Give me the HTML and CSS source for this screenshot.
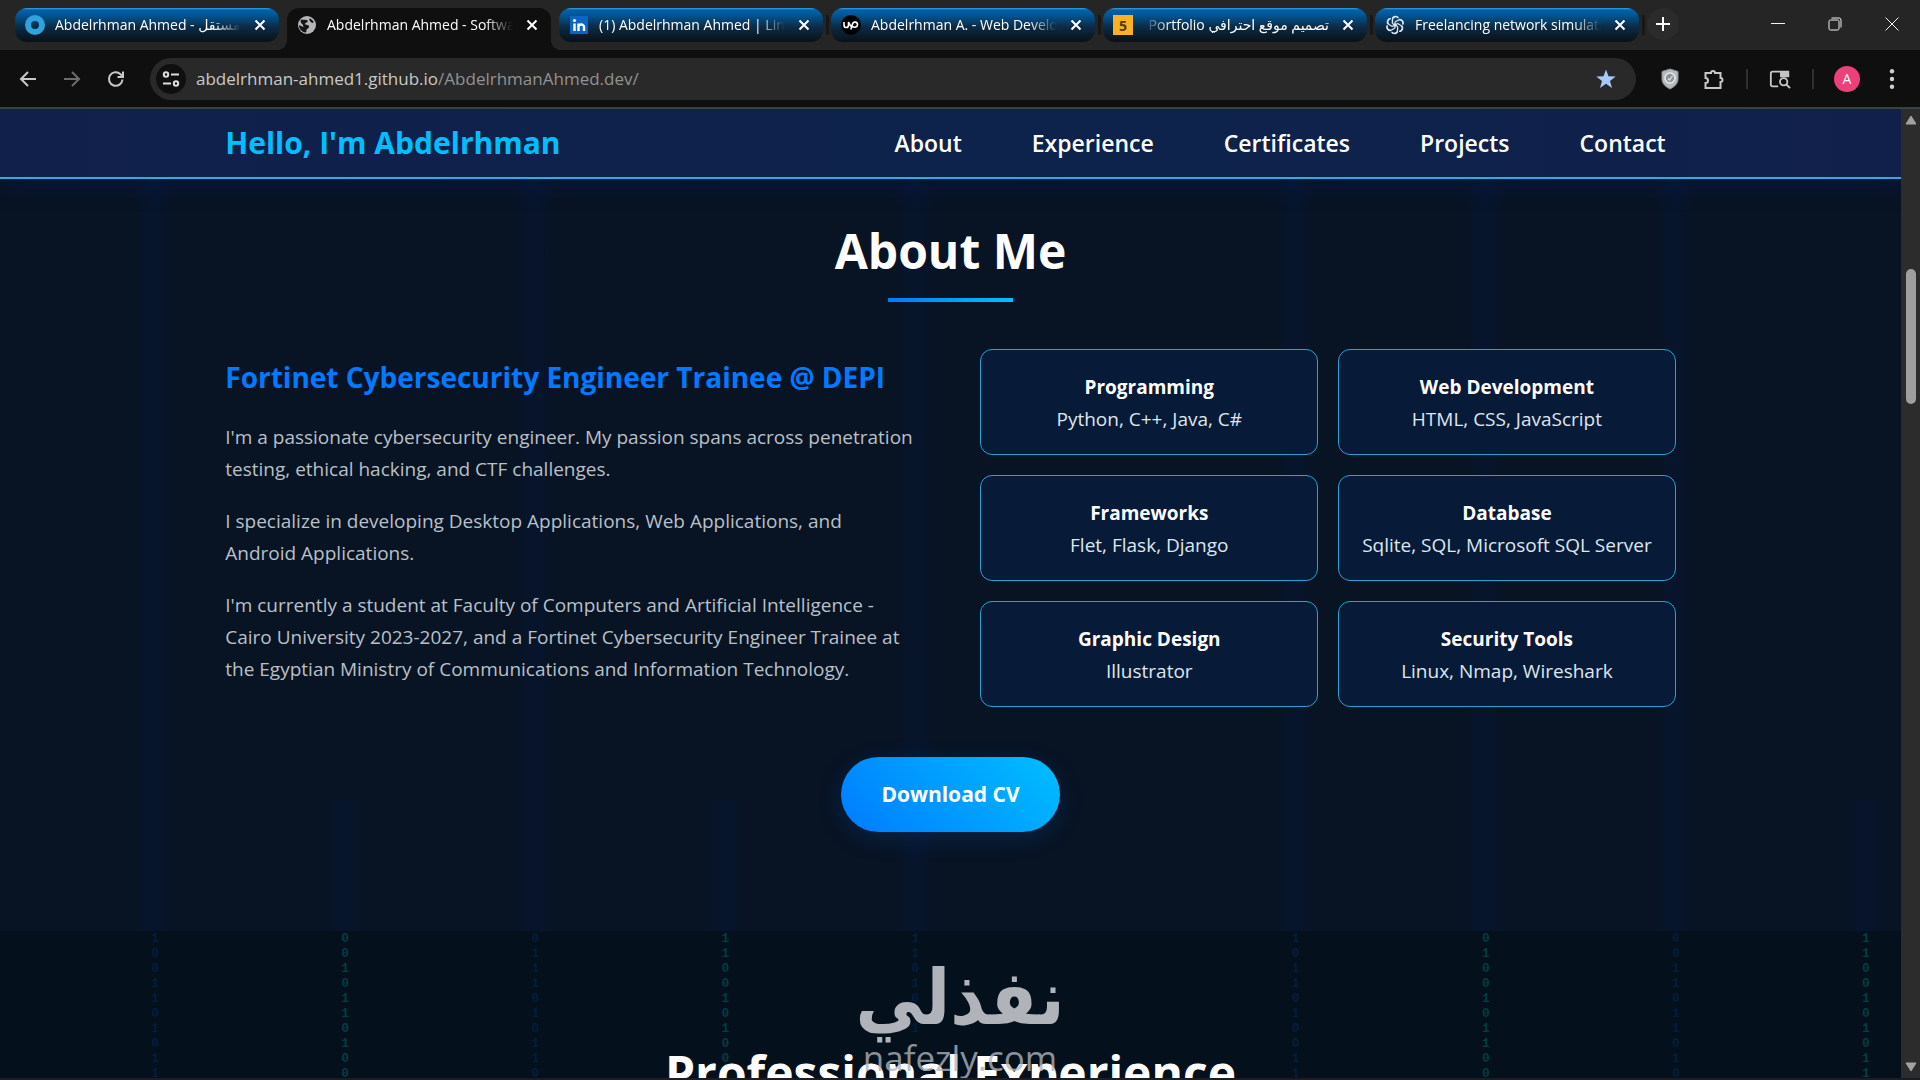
FILE: index.html
```html
<!DOCTYPE html>
<html lang="en">
<head>
<meta charset="utf-8">
<meta name="viewport" content="width=device-width, initial-scale=1">
<title>Abdelrhman Ahmed - Software Engineer</title>
<link rel="stylesheet" href="styles.css">
</head>
<body>
<div class="browser">
  <div class="tabstrip">
    <div class="tabs">
      <div class="tab">
        <svg class="favicon" viewBox="0 0 20 20"><circle cx="10" cy="10" r="7" fill="none" stroke="#2fa4dc" stroke-width="6"/></svg>
        <span class="tab-title">Abdelrhman Ahmed - مستقل</span>
        <button class="tab-close" aria-label="Close tab"><svg viewBox="0 0 14 14"><path d="M2.500 2.500l9 9M11.500 2.500l-9 9"/></svg></button>
      </div>
      <div class="tab active">
        <svg class="favicon" viewBox="0 0 20 20"><circle cx="10" cy="10" r="9" fill="#b4b6b9"/><path d="M4 4.500c2 1 5-.5 6.500 1 1 1.500-1 2-2 2.500-1 .8-.5 1.500.8 1.700 1.700.3 3 .6 2.700 2.300-.3 1.500-2 1.500-2.500 2.800-.3 1 .2 1.700-.5 2.700C4.500 17 2 14 2 10c1 1 3 1 4 2 .8.8.3-2-.8-3C4 8 3 6.500 4 4.500zM12.500 3.500c2 .5 3.500 2 4.300 4-1.300.8-3-.2-3.800-1.300-.6-1-.9-1.700-.5-2.700z" fill="#151515"/></svg>
        <span class="tab-title">Abdelrhman Ahmed - Software</span>
        <button class="tab-close" aria-label="Close tab"><svg viewBox="0 0 14 14"><path d="M2.500 2.500l9 9M11.500 2.500l-9 9"/></svg></button>
      </div>
      <div class="tab">
        <svg class="favicon" viewBox="0 0 20 20"><rect x="1" y="1" width="18" height="18" fill="#0a66c2"/><circle cx="5.500" cy="5.500" r="1.600" fill="#fff"/><path d="M5.500 8.500V16M9.500 8.500V16M9.500 12c0-3 5.500-3.500 5.500 0v4" fill="none" stroke="#fff" stroke-width="2.400"/></svg>
        <span class="tab-title">(1) Abdelrhman Ahmed | LinkedIn</span>
        <button class="tab-close" aria-label="Close tab"><svg viewBox="0 0 14 14"><path d="M2.500 2.500l9 9M11.500 2.500l-9 9"/></svg></button>
      </div>
      <div class="tab">
        <svg class="favicon" viewBox="0 0 20 20"><circle cx="10" cy="10" r="10" fill="#000"/><path d="M3 7v3c0 3.400 4.500 3.400 4.500 0V7c1 2.500 2.500 4.500 4 5.500M9.800 14.500l1.700-5.500c.9-2.800 5-2.300 5 .4 0 2.800-3.500 3.600-5 1.800" fill="none" stroke="#fff" stroke-width="1.600"/></svg>
        <span class="tab-title">Abdelrhman A. - Web Developer</span>
        <button class="tab-close" aria-label="Close tab"><svg viewBox="0 0 14 14"><path d="M2.500 2.500l9 9M11.500 2.500l-9 9"/></svg></button>
      </div>
      <div class="tab">
        <span class="favicon five">5</span>
        <span class="tab-title rtl" dir="rtl">تصميم موقع احترافي Portfolio</span>
        <button class="tab-close" aria-label="Close tab"><svg viewBox="0 0 14 14"><path d="M2.500 2.500l9 9M11.500 2.500l-9 9"/></svg></button>
      </div>
      <div class="tab">
        <svg class="favicon" viewBox="0 0 20 20" fill="none" stroke="#dfe6ee" stroke-width="1.300"><path id="petal" d="M10 7L13 5.300a3.300 3.300 0 0 1 4.600 4.400M10 7v4.500M7.300 3.500A3.400 3.400 0 0 1 13 2.600"/><use href="#petal" transform="rotate(60 10 10)"/><use href="#petal" transform="rotate(120 10 10)"/><use href="#petal" transform="rotate(180 10 10)"/><use href="#petal" transform="rotate(240 10 10)"/><use href="#petal" transform="rotate(300 10 10)"/></svg>
        <span class="tab-title">Freelancing network simulation</span>
        <button class="tab-close" aria-label="Close tab"><svg viewBox="0 0 14 14"><path d="M2.500 2.500l9 9M11.500 2.500l-9 9"/></svg></button>
      </div>
      <button class="new-tab" aria-label="New tab"><svg viewBox="0 0 14 14"><path d="M7 0v14M0 7h14"/></svg></button>
    </div>
    <div class="window-controls">
      <button aria-label="Minimize"><svg viewBox="0 0 14 14"><path d="M0 6.500h14"/></svg></button>
      <button aria-label="Restore"><svg viewBox="0 0 14 14"><rect x="1" y="3" width="10" height="10" rx="1.500"/><path d="M3.500 1H11a2 2 0 0 1 2 2v7.500"/></svg></button>
      <button aria-label="Close"><svg viewBox="0 0 14 14"><path d="M.5.5l13 13M13.500.5l-13 13"/></svg></button>
    </div>
  </div>

  <div class="toolbar">
    <button class="tool" aria-label="Back"><svg viewBox="0 0 20 20"><path d="M18 10H3M10 3l-7 7 7 7"/></svg></button>
    <button class="tool dim" aria-label="Forward"><svg viewBox="0 0 20 20"><path d="M2 10h15M10 3l7 7-7 7"/></svg></button>
    <button class="tool" aria-label="Reload"><svg viewBox="0 0 20 20"><path d="M16.500 10.500a6.800 6.800 0 1 1-2-5.300l2.500 2.300M17 2.500v5.500h-5.500"/></svg></button>
    <div class="address">
      <button class="site-info" aria-label="Site information"><svg viewBox="0 0 18 18"><circle cx="4" cy="4.500" r="2.200"/><path d="M9 4.500h8M1 13.500h8"/><circle cx="14" cy="13.500" r="2.200"/></svg></button>
      <span class="url">abdelrhman-ahmed1.github.io<span class="url-path">/AbdelrhmanAhmed.dev/</span></span>
      <button class="star" aria-label="Bookmark"><svg viewBox="0 0 20 20"><path d="M10 .5l2.500 6.800 7.200.2-5.700 4.400 2 7-6-4.100-6 4.100 2-7L.3 7.500l7.200-.2z"/></svg></button>
    </div>
    <div class="extensions">
      <button class="tool" aria-label="Shield"><svg viewBox="0 0 20 22"><path d="M10 1l8 2.500V11c0 5-4 8-8 10-4-2-8-5-8-10V3.500z" fill="#b4b9bf" stroke="#8d9298" stroke-width="1"/><circle cx="10" cy="10" r="5" fill="#8b939b" stroke="#e8ebee" stroke-width="1.500"/><path d="M8 10.500l1.500 1.500 3-4" stroke="#e8ebee" stroke-width="1.200"/></svg></button>
      <button class="tool" aria-label="Extensions"><svg viewBox="0 0 22 22"><path d="M2.500 5h5.500a2 2 0 0 1 4 0h5.500v5a2 2 0 0 1 0 4v6h-15v-5a2.500 2.500 0 0 0 0-5z"/></svg></button>
      <span class="divider"></span>
      <button class="tool" aria-label="Search side panel"><svg viewBox="0 0 24 22"><path d="M10 19H4a2 2 0 0 1-2-2V5a2 2 0 0 1 2-2h17v5"/><path d="M12 3h7a3 3 0 0 1 3 3v3H12z" fill="#c4c4c4" stroke="none"/><circle cx="16" cy="14" r="4"/><path d="M19 17l4 4"/></svg></button>
      <span class="divider"></span>
      <button class="avatar" aria-label="Profile">A</button>
      <button class="tool" aria-label="Menu"><svg viewBox="0 0 20 20"><g fill="#d0d0d0" stroke="none"><circle cx="10" cy="3" r="2"/><circle cx="10" cy="10" r="2"/><circle cx="10" cy="17" r="2"/></g></svg></button>
    </div>
  </div>

  <div class="viewport">
    <div class="page">
      <header class="site-header">
        <div class="container nav-row">
          <a class="brand" href="#home">Hello, I'm Abdelrhman</a>
          <nav class="nav-links">
            <a href="#about">About</a>
            <a href="#experience">Experience</a>
            <a href="#certificates">Certificates</a>
            <a href="#projects">Projects</a>
            <a href="#contact">Contact</a>
          </nav>
        </div>
      </header>

      <section class="about" id="about">
        <div class="rain glow" aria-hidden="true"><i></i><i class="low"></i><i></i><i class="low"></i><i></i><i class="none"></i><i></i><i></i><i></i><i class="low"></i></div>
        <div class="container">
          <h2 class="section-title underlined">About Me</h2>
          <div class="about-grid">
            <div class="about-text">
              <h3>Fortinet Cybersecurity Engineer Trainee @ DEPI</h3>
              <p>I'm a passionate cybersecurity engineer. My passion spans across penetration<br>testing, ethical hacking, and CTF challenges.</p>
              <p>I specialize in developing Desktop Applications, Web Applications, and<br>Android Applications.</p>
              <p>I'm currently a student at Faculty of Computers and Artificial Intelligence -<br>Cairo University 2023-2027, and a Fortinet Cybersecurity Engineer Trainee at<br>the Egyptian Ministry of Communications and Information Technology.</p>
            </div>
            <div class="skills">
              <div class="skill"><strong>Programming</strong><span>Python, C++, Java, C#</span></div>
              <div class="skill"><strong>Web Development</strong><span>HTML, CSS, JavaScript</span></div>
              <div class="skill"><strong>Frameworks</strong><span>Flet, Flask, Django</span></div>
              <div class="skill"><strong>Database</strong><span>Sqlite, SQL, Microsoft SQL Server</span></div>
              <div class="skill"><strong>Graphic Design</strong><span>Illustrator</span></div>
              <div class="skill"><strong>Security Tools</strong><span>Linux, Nmap, Wireshark</span></div>
            </div>
          </div>
          <div class="cta"><a class="button" href="#cv">Download CV</a></div>
        </div>
      </section>

      <section class="experience" id="experience">
        <div class="rain digits" aria-hidden="true">
          <span class="blue">1 0 0 1 1 0 1 0 1 1</span>
          <span>0 0 1 0 1 1 0 1 0 0</span>
          <span class="blue">0 1 1 1 0 1 0 1 1 0</span>
          <span>1 1 0 0 1 0 1 0 0</span>
          <span class="blue">1 1 0 1 0 1 1</span>
          <span></span>
          <span class="blue">1 0 1 1 0 1 0 0 1 1</span>
          <span>0 1 0 0 1 0 1 1 0 0</span>
          <span class="blue">0 0 1 1 0 1 1 0 1 0</span>
          <span>1 1 0 0 1 0 1 0 1 1</span>
        </div>
        <h2 class="section-title">Professional Experience</h2>
      </section>
    </div>
    <div class="scrollbar" aria-hidden="true">
      <svg viewBox="0 0 12 10"><path d="M6 1l5 8H1z"/></svg>
      <div class="track"><div class="thumb"></div></div>
      <svg viewBox="0 0 12 10"><path d="M6 9l5-8H1z"/></svg>
    </div>
  </div>
  <div class="watermark"><span class="wm-ar" lang="ar">نفذلي</span><span class="wm-en">nafezly.com</span></div>
</div>
</body>
</html>
```
FILE: styles.css
```css
* { box-sizing: border-box; }
body {
  margin: 0;
  background: #04101d;
  color: #fff;
  font-family: "Open Sans", "Noto Sans", "DejaVu Sans", sans-serif;
}
button { border: 0; padding: 0; background: none; color: inherit; font: inherit; }
a { color: inherit; text-decoration: none; }
svg { display: block; flex: none; }

.browser { position: relative; display: flex; flex-direction: column; height: 100vh; overflow: hidden; border-bottom: 2px solid #1c1d22; }

/* tab strip */
.tabstrip { display: flex; justify-content: space-between; height: 50px; flex: none; padding-left: 15px; background: #252525; }
.tabs { display: flex; gap: 8px; flex: 1; padding-top: 8px; }
.tab {
  position: relative;
  display: flex; align-items: center;
  flex: 0 1 264px; min-width: 0; height: 34px;
  padding: 0 12px 0 10px;
  border-radius: 12px;
  background: linear-gradient(#3aa2e4 0, #0060a6 2px, #005a9c 6px, #0b2c47 55%, #0a1016);
}
.tab:not(.active)::after {
  content: ""; position: absolute; right: -6px; top: 7px;
  width: 3px; height: 20px; background: #171717;
}
.tab:first-child::after { display: none; }
.tab.active { height: 42px; padding-bottom: 8px; border-radius: 12px 12px 0 0; background: #0f0f0f; }
.tab.active::before, .tab.active::after {
  content: ""; position: absolute; bottom: 0; width: 10px; height: 10px;
}
.tab.active::before { left: -10px; background: radial-gradient(circle at 0 0, transparent 10px, #0f0f0f 10px); }
.tab.active::after { right: -10px; background: radial-gradient(circle at 100% 0, transparent 10px, #0f0f0f 10px); }
.favicon { width: 20px; height: 20px; flex: none; margin-right: 10px; }
.five { display: grid; place-items: center; background: #fdb022; color: #4a3a10; font-size: 14px; font-weight: 700; }
.tab-title {
  flex: 1; min-width: 0; margin-right: 12px;
  overflow: hidden; white-space: nowrap;
  font-size: 14px; line-height: 24px;
  -webkit-mask-image: linear-gradient(to left, transparent, #000 28px);
  mask-image: linear-gradient(to left, transparent, #000 28px);
}
.tab-title.rtl {
  -webkit-mask-image: linear-gradient(to right, transparent, #000 28px);
  mask-image: linear-gradient(to right, transparent, #000 28px);
}
.tab-close svg { width: 14px; height: 14px; stroke: #fff; stroke-width: 2; }
.new-tab { display: grid; place-items: center; width: 32px; height: 32px; border-radius: 50%; background: #2b2b2b; }
.new-tab svg { width: 14px; height: 14px; stroke: #fff; stroke-width: 2; }
.window-controls { display: flex; height: 48px; }
.window-controls button { display: grid; place-items: center; width: 57px; }
.window-controls svg { width: 14px; height: 14px; fill: none; stroke: #f2f2f2; stroke-width: 1; }

/* toolbar */
.toolbar {
  display: flex; align-items: center; height: 59px; flex: none;
  padding: 0 6px;
  background: #0f0f0f; border-bottom: 2px solid #384144;
}
.tool { display: grid; place-items: center; width: 44px; height: 40px; }
.tool svg { width: 20px; height: 20px; fill: none; stroke: #c8c8c8; stroke-width: 2; }
.tool.dim { opacity: .5; }
.address {
  display: flex; align-items: center; flex: 1; height: 42px;
  margin-left: 12px; padding: 0 20px 0 6px;
  border-radius: 21px; background: #292929;
}
.site-info { display: grid; place-items: center; width: 30px; height: 30px; margin-right: 10px; border-radius: 50%; background: #0f0f0f; }
.site-info svg { width: 18px; height: 18px; fill: none; stroke: #dcdcdc; stroke-width: 2; }
.url { flex: 1; font-size: 17px; line-height: 24px; color: #c9c9c9; }
.url-path { color: #929292; }
.star svg { width: 20px; height: 20px; fill: #a8c7fa; }
.extensions { display: flex; align-items: center; padding-left: 12px; }
.extensions .tool svg { width: 22px; height: 22px; }
.divider { width: 2px; height: 20px; margin: 0 10px; background: #303030; }
.avatar { width: 26px; height: 26px; margin: 0 10px; border-radius: 50%; background: #ec407a; font-size: 14px; line-height: 26px; }

/* viewport and scrollbar */
.viewport { display: flex; flex: 1; min-height: 0; }
.page { flex: 1; min-width: 0; overflow: hidden; font-size: 19px; line-height: 32px; }
.scrollbar { display: flex; flex-direction: column; align-items: center; width: 19px; padding: 6px 0; background: #2c2c2c; }
.scrollbar svg { width: 12px; height: 10px; fill: #a2a2a2; stroke: #a2a2a2; stroke-linejoin: round; }
.track { flex: 1; width: 10px; padding-top: 144px; }
.thumb { height: 17%; border-radius: 5px; background: #9f9f9f; }

/* site header */
.container { position: relative; width: 76.3%; margin: 0 auto; }
.site-header {
  position: relative; z-index: 1;
  background: linear-gradient(90deg, #10204a, #0d234b 55%, #10204a);
  border-bottom: 2px solid #2fabdc;
  box-shadow: 0 4px 28px rgba(0, 40, 140, .25);
}
.nav-row { display: flex; align-items: center; justify-content: space-between; height: 68px; }
.brand { color: #00bfff; font-size: 30px; font-weight: 700; line-height: 40px; }
.nav-links { display: flex; gap: 70px; padding-right: 10px; font-size: 23px; font-weight: 600; }

/* falling digits behind the sections */
.rain { position: absolute; inset: 0; display: grid; grid-template-columns: repeat(10, 1fr); }
.glow i {
  width: 40px; margin: 0 16px 0 auto;
  background: linear-gradient(90deg, transparent, rgba(4, 24, 64, .3) 40%, rgba(4, 24, 64, .3) 60%, transparent);
}
.glow .low { margin-top: 620px; }
.glow .none { visibility: hidden; }
.digits span {
  width: 10px; margin: 0 30px 0 auto;
  color: rgba(0, 150, 140, .34); text-align: center;
  font-family: "Liberation Mono", monospace; font-size: 13px; font-weight: 700; line-height: 15px;
}
.digits .blue { color: rgba(0, 70, 170, .26); }

/* about */
.about { position: relative; padding: 32px 0 99px; background: #081323; }
.section-title { margin: 0; font-size: 48px; font-weight: 700; line-height: 80px; text-align: center; }
.underlined { padding-bottom: 58px; background: linear-gradient(90deg, #007bff, #00bfff) center 87px / 125px 4px no-repeat; }
.about-grid { display: grid; grid-template-columns: 1fr 1fr; gap: 60px; align-items: center; }
.about-text { padding-top: 2px; }
.about-text h3 { margin: 0 0 20px; color: #007bff; font-size: 28px; font-weight: 700; line-height: 48px; white-space: nowrap; }
.about-text p { margin: 0 0 20px; color: #b9c0c8; white-space: nowrap; }
.skills { display: grid; grid-template-columns: 1fr 1fr; gap: 20px; }
.skill {
  display: flex; flex-direction: column; align-items: center;
  padding: 21px 10px 19px; border: 1px solid #27a3cf; border-radius: 12px;
  background: #071b38; white-space: nowrap;
}
.skill span { color: #dfe6ee; }
.cta { display: flex; justify-content: center; padding-top: 50px; }
.button {
  padding: 21px 40px; border-radius: 38px;
  background: linear-gradient(45deg, #007bff, #00bfff);
  box-shadow: 0 6px 26px rgba(0, 123, 255, .16);
  font-size: 21px; font-weight: 700; line-height: 33px;
}

/* experience */
.experience { position: relative; height: 400px; padding-top: 102px; background: #04101c; overflow: hidden; }
.experience .section-title { position: relative; }

/* watermark over the page */
.watermark {
  position: absolute; left: 0; right: 0; bottom: 0; z-index: 2;
  display: flex; flex-direction: column; align-items: center;
  color: #b0b4ba; pointer-events: none;
}
.wm-ar { font-family: "DejaVu Sans Condensed", "DejaVu Sans", sans-serif; font-size: 76px; font-weight: 700; line-height: 80px; }
.wm-en { font-family: "Open Sans", sans-serif; font-size: 35px; line-height: 40px; color: rgba(176, 180, 188, .8); }
```
